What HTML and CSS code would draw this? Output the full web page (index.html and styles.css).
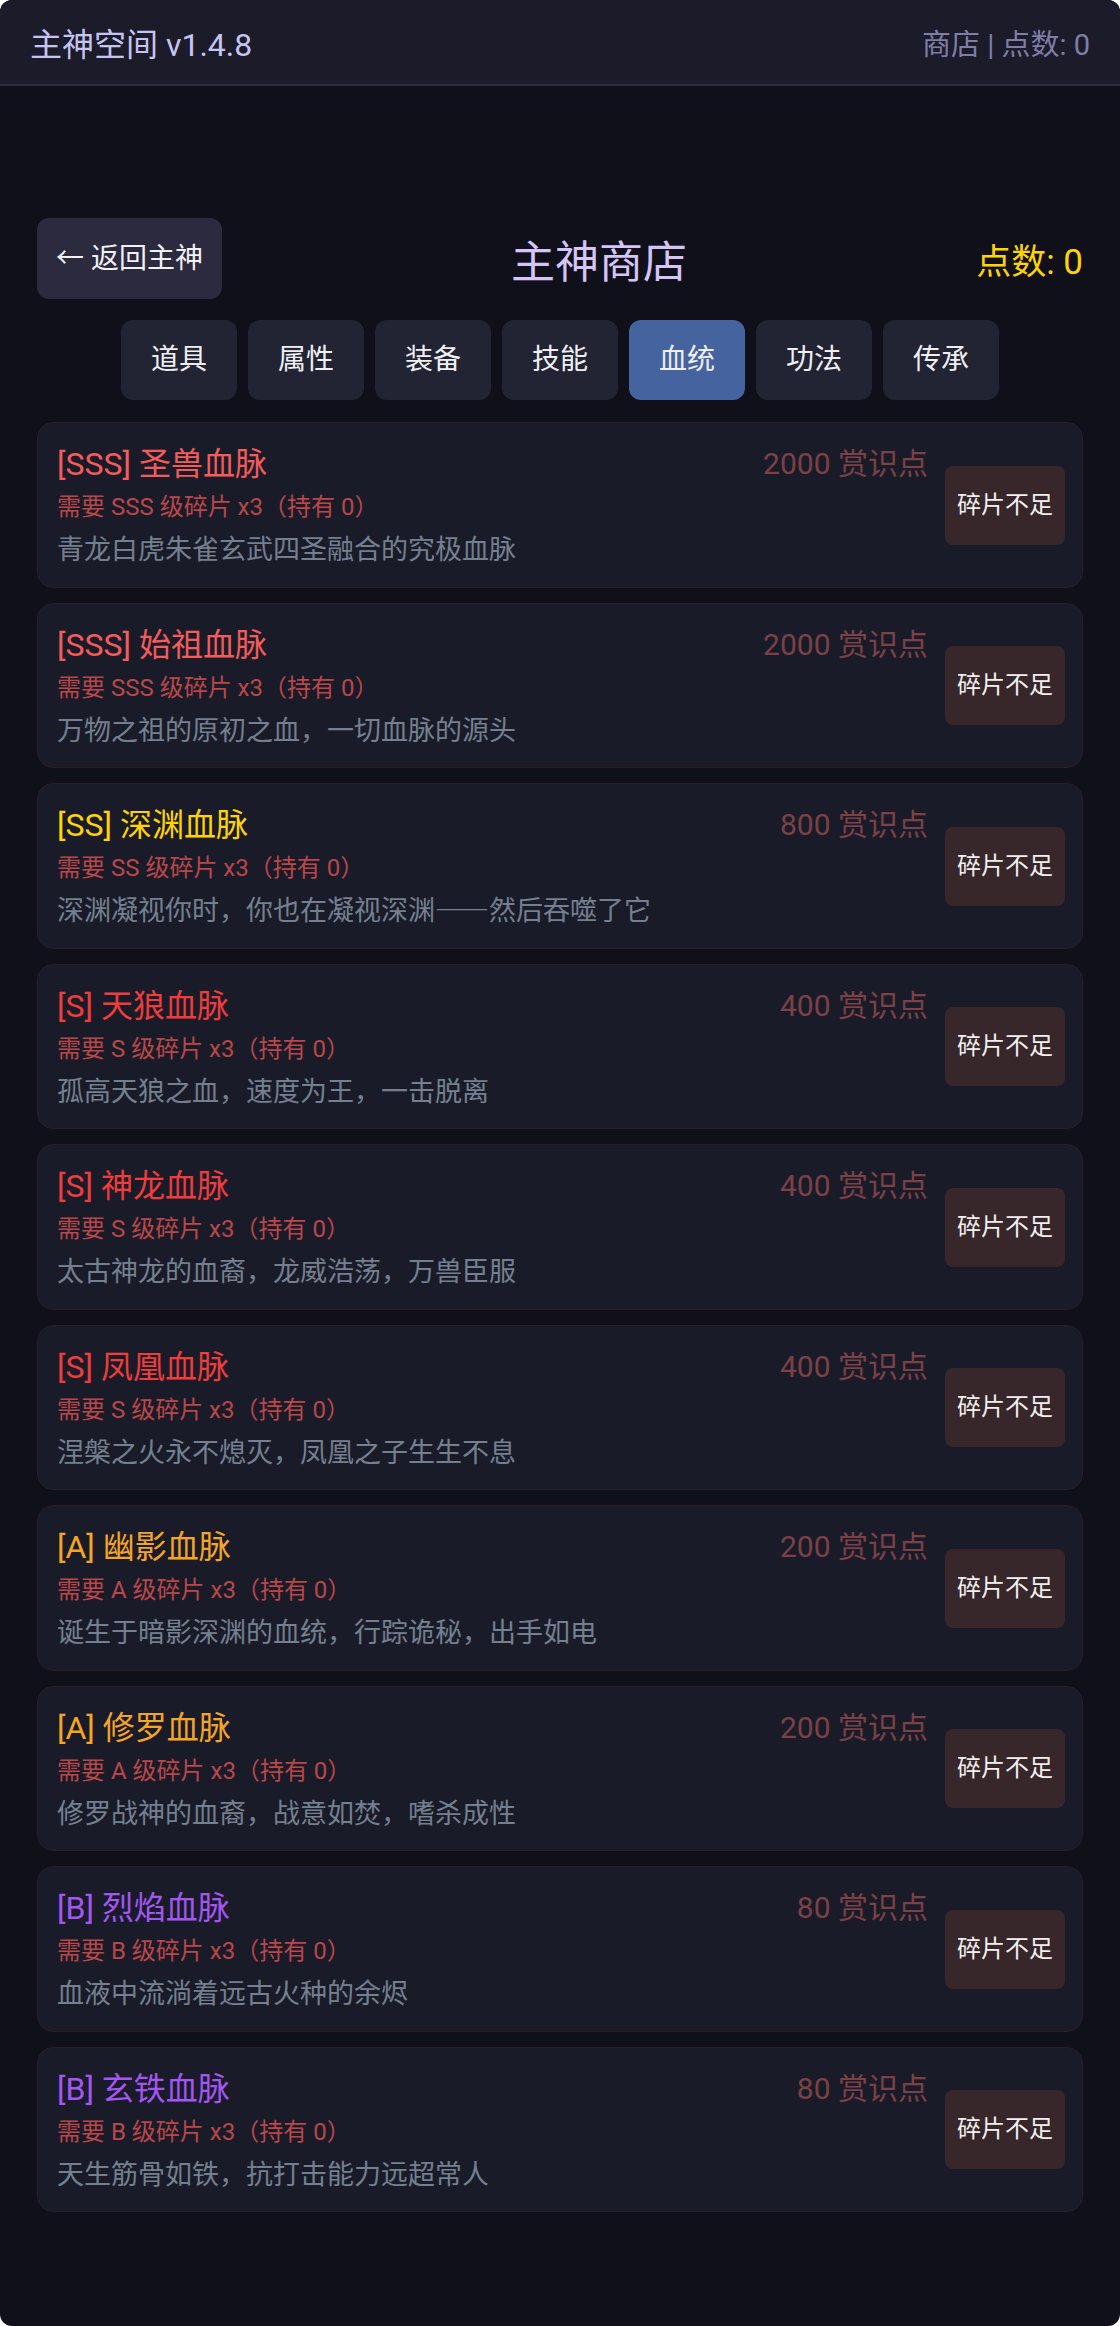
FILE: index.html
```html
<!DOCTYPE html>
<html lang="zh-CN">
<head>
    <meta charset="UTF-8">
    <meta name="viewport" content="width=device-width, initial-scale=1.0">
    <title>主神空间 - 商店</title>
    <link rel="stylesheet" href="styles.css">
</head>
<body>
    <div class="app">
        <header class="top-bar">
            <div class="app-name">主神空间 v1.4.8</div>
            <div class="app-status">商店 | 点数: 0</div>
        </header>

        <main class="shop">
            <div class="shop-header">
                <button class="back-btn"><span class="cjk">←</span> 返回主神</button>
                <h2 class="shop-title">主神商店</h2>
                <div class="shop-points">点数: 0</div>
            </div>

            <nav class="shop-tabs">
                <button class="tab">道具</button>
                <button class="tab">属性</button>
                <button class="tab">装备</button>
                <button class="tab">技能</button>
                <button class="tab active">血统</button>
                <button class="tab">功法</button>
                <button class="tab">传承</button>
            </nav>

            <div class="item-list">
                <div class="item">
                    <div class="item-info">
                        <div class="item-head">
                            <span class="item-name grade-sss">[SSS] 圣兽血脉</span>
                            <span class="item-price">2000 赏识点</span>
                        </div>
                        <div class="item-req">需要 SSS 级碎片 x3（持有 0）</div>
                        <div class="item-desc">青龙白虎朱雀玄武四圣融合的究极血脉</div>
                    </div>
                    <button class="buy-btn" disabled>碎片不足</button>
                </div>
                <div class="item">
                    <div class="item-info">
                        <div class="item-head">
                            <span class="item-name grade-sss">[SSS] 始祖血脉</span>
                            <span class="item-price">2000 赏识点</span>
                        </div>
                        <div class="item-req">需要 SSS 级碎片 x3（持有 0）</div>
                        <div class="item-desc">万物之祖的原初之血，一切血脉的源头</div>
                    </div>
                    <button class="buy-btn" disabled>碎片不足</button>
                </div>
                <div class="item">
                    <div class="item-info">
                        <div class="item-head">
                            <span class="item-name grade-ss">[SS] 深渊血脉</span>
                            <span class="item-price">800 赏识点</span>
                        </div>
                        <div class="item-req">需要 SS 级碎片 x3（持有 0）</div>
                        <div class="item-desc">深渊凝视你时，你也在凝视深渊<span class="cjk">——</span>然后吞噬了它</div>
                    </div>
                    <button class="buy-btn" disabled>碎片不足</button>
                </div>
                <div class="item">
                    <div class="item-info">
                        <div class="item-head">
                            <span class="item-name grade-s">[S] 天狼血脉</span>
                            <span class="item-price">400 赏识点</span>
                        </div>
                        <div class="item-req">需要 S 级碎片 x3（持有 0）</div>
                        <div class="item-desc">孤高天狼之血，速度为王，一击脱离</div>
                    </div>
                    <button class="buy-btn" disabled>碎片不足</button>
                </div>
                <div class="item">
                    <div class="item-info">
                        <div class="item-head">
                            <span class="item-name grade-s">[S] 神龙血脉</span>
                            <span class="item-price">400 赏识点</span>
                        </div>
                        <div class="item-req">需要 S 级碎片 x3（持有 0）</div>
                        <div class="item-desc">太古神龙的血裔，龙威浩荡，万兽臣服</div>
                    </div>
                    <button class="buy-btn" disabled>碎片不足</button>
                </div>
                <div class="item">
                    <div class="item-info">
                        <div class="item-head">
                            <span class="item-name grade-s">[S] 凤凰血脉</span>
                            <span class="item-price">400 赏识点</span>
                        </div>
                        <div class="item-req">需要 S 级碎片 x3（持有 0）</div>
                        <div class="item-desc">涅槃之火永不熄灭，凤凰之子生生不息</div>
                    </div>
                    <button class="buy-btn" disabled>碎片不足</button>
                </div>
                <div class="item">
                    <div class="item-info">
                        <div class="item-head">
                            <span class="item-name grade-a">[A] 幽影血脉</span>
                            <span class="item-price">200 赏识点</span>
                        </div>
                        <div class="item-req">需要 A 级碎片 x3（持有 0）</div>
                        <div class="item-desc">诞生于暗影深渊的血统，行踪诡秘，出手如电</div>
                    </div>
                    <button class="buy-btn" disabled>碎片不足</button>
                </div>
                <div class="item">
                    <div class="item-info">
                        <div class="item-head">
                            <span class="item-name grade-a">[A] 修罗血脉</span>
                            <span class="item-price">200 赏识点</span>
                        </div>
                        <div class="item-req">需要 A 级碎片 x3（持有 0）</div>
                        <div class="item-desc">修罗战神的血裔，战意如焚，嗜杀成性</div>
                    </div>
                    <button class="buy-btn" disabled>碎片不足</button>
                </div>
                <div class="item">
                    <div class="item-info">
                        <div class="item-head">
                            <span class="item-name grade-b">[B] 烈焰血脉</span>
                            <span class="item-price">80 赏识点</span>
                        </div>
                        <div class="item-req">需要 B 级碎片 x3（持有 0）</div>
                        <div class="item-desc">血液中流淌着远古火种的余烬</div>
                    </div>
                    <button class="buy-btn" disabled>碎片不足</button>
                </div>
                <div class="item">
                    <div class="item-info">
                        <div class="item-head">
                            <span class="item-name grade-b">[B] 玄铁血脉</span>
                            <span class="item-price">80 赏识点</span>
                        </div>
                        <div class="item-req">需要 B 级碎片 x3（持有 0）</div>
                        <div class="item-desc">天生筋骨如铁，抗打击能力远超常人</div>
                    </div>
                    <button class="buy-btn" disabled>碎片不足</button>
                </div>
            </div>
        </main>
    </div>
</body>
</html>
```

FILE: styles.css
```css
body {
    margin: 0;
    background: #ffffff;
    font-family: Roboto, "Noto Sans CJK SC", sans-serif;
}

.cjk {
    font-family: "Noto Sans CJK SC", sans-serif;
    line-height: 1;
}

.app {
    min-height: 2326px;
    background: #10101a;
    border-radius: 12px;
    overflow: hidden;
}

.top-bar {
    display: flex;
    justify-content: space-between;
    align-items: center;
    height: 84px;
    padding: 0 30px;
    background: #1c1b29;
    border-bottom: 2px solid #2e2c45;
}

.app-name {
    font-size: 32px;
    color: #c6c4f2;
}

.app-status {
    font-size: 29px;
    color: #7f7ea6;
}

.shop {
    padding: 132px 37px 0;
}

.shop-header {
    display: flex;
    justify-content: space-between;
    align-items: center;
}

.back-btn {
    font-family: inherit;
    font-size: 28px;
    line-height: 41px;
    padding: 20px 19px;
    color: #f2f2f6;
    background: #2c2a3f;
    border: none;
    border-radius: 12px;
    cursor: pointer;
}

.shop-title {
    margin: 0;
    font-size: 44px;
    font-weight: normal;
    color: #d5c4f6;
}

.shop-points {
    font-size: 35px;
    color: #ffd400;
}

.shop-tabs {
    display: flex;
    justify-content: center;
    gap: 11px;
    margin: 21px 0 22px;
}

.tab {
    font-family: inherit;
    font-size: 28px;
    line-height: 42px;
    padding: 19px 30px;
    color: #f0f0f4;
    background: #222434;
    border: none;
    border-radius: 12px;
    cursor: pointer;
}

.tab.active {
    background: #45639f;
}

.item-list {
    display: flex;
    flex-direction: column;
    gap: 15px;
}

.item {
    display: flex;
    align-items: center;
    gap: 17px;
    padding: 18px 17px 17.5px 19px;
    background: #1a1b28;
    border: 1px solid #2a1d26;
    border-radius: 16px;
}

.item-info {
    flex: 1;
}

.item-head {
    display: flex;
    justify-content: space-between;
    align-items: center;
    height: 40px;
}

.item-name {
    font-size: 32px;
}

.item-price {
    font-size: 30px;
    color: #7b4146;
}

.item-req {
    margin-top: 9px;
    font-size: 24px;
    line-height: 34px;
    color: #b9474a;
}

.item-desc {
    margin-top: 7px;
    font-size: 27px;
    line-height: 38px;
    color: #74808f;
}

.buy-btn {
    font-family: inherit;
    font-size: 24px;
    line-height: 35px;
    padding: 22px 12px;
    color: #f4f0f0;
    background: #37272a;
    border: none;
    border-radius: 8px;
}

.grade-sss {
    color: #f45b5b;
}

.grade-ss {
    color: #ffd400;
}

.grade-s {
    color: #ef3c3c;
}

.grade-a {
    color: #f5a524;
}

.grade-b {
    color: #a356f0;
}
```
